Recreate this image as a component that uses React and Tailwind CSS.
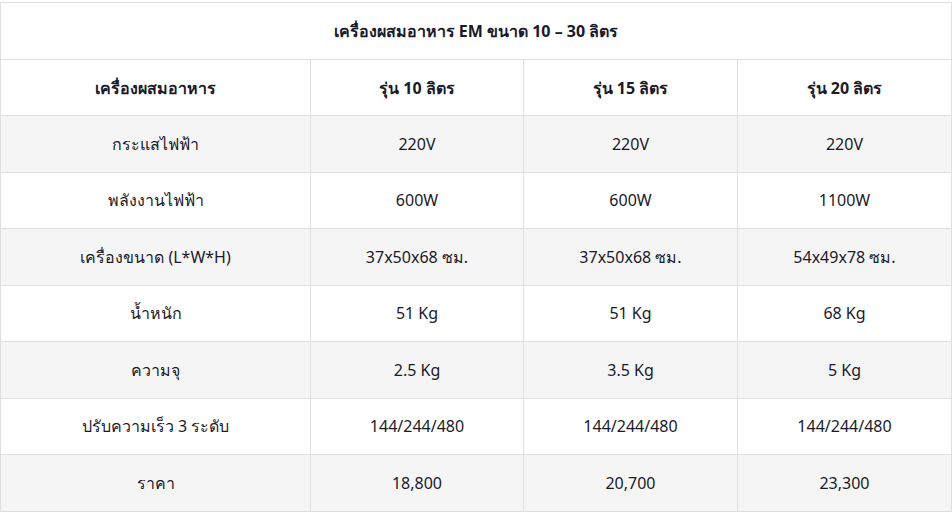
export default function App() {
  const rows = [
    ["กระแสไฟฟ้า", "220V", "220V", "220V"],
    ["พลังงานไฟฟ้า", "600W", "600W", "1100W"],
    ["เครื่องขนาด (L*W*H)", "37x50x68 ซม.", "37x50x68 ซม.", "54x49x78 ซม."],
    ["น้ำหนัก", "51 Kg", "51 Kg", "68 Kg"],
    ["ความจุ", "2.5 Kg", "3.5 Kg", "5 Kg"],
    ["ปรับความเร็ว 3 ระดับ", "144/244/480", "144/244/480", "144/244/480"],
    ["ราคา", "18,800", "20,700", "23,300"],
  ];
  const cell = "border border-[#e0e0e0] text-center align-middle p-0";
  return (
    <div className="w-[952px] h-[512px] bg-white pt-[2px]" style={{ fontFamily: '"Noto Sans", "Liberation Sans", sans-serif' }}>
      <table className="w-[951px] border-collapse table-fixed text-[16px] text-[#1a1a2a]">
        <colgroup>
          <col className="w-[310px]" />
          <col className="w-[213px]" />
          <col className="w-[214px]" />
          <col className="w-[214px]" />
        </colgroup>
        <tbody>
          <tr className="h-[57px] bg-white">
            <td colSpan={4} className={cell + " font-bold"}>เครื่องผสมอาหาร EM ขนาด 10 – 30 ลิตร</td>
          </tr>
          <tr className="h-[56px] bg-white">
            <td className={cell + " font-bold"}>เครื่องผสมอาหาร</td>
            <td className={cell + " font-bold"}>รุ่น 10 ลิตร</td>
            <td className={cell + " font-bold"}>รุ่น 15 ลิตร</td>
            <td className={cell + " font-bold"}>รุ่น 20 ลิตร</td>
          </tr>
          {rows.map((r, i) => (
            <tr key={i} className={(i % 2 === 0 ? "bg-[#f5f5f5]" : "bg-white") + " h-[56.5px]"}>
              {r.map((c, j) => (
                <td key={j} className={cell}>{c}</td>
              ))}
            </tr>
          ))}
        </tbody>
      </table>
    </div>
  );
}
